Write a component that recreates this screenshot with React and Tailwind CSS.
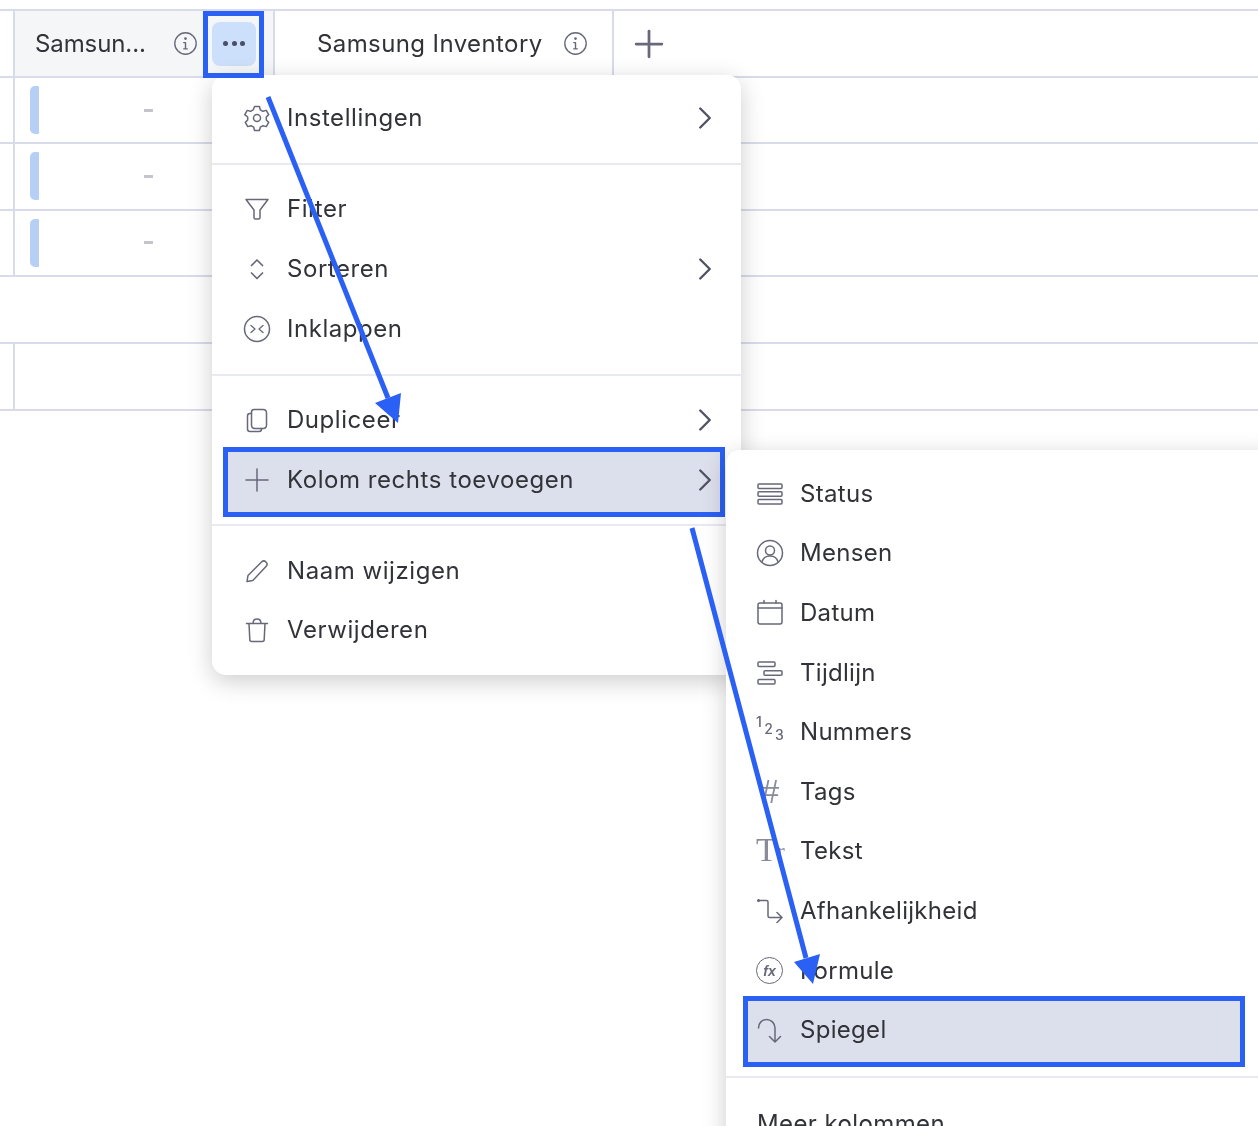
import { ChevronRight, Plus } from 'lucide-react';

const Ico = ({ children, size = 28 }) => (
  <svg width={size} height={size} viewBox="0 0 28 28" fill="none" stroke="#676879" strokeWidth="1.5" strokeLinecap="round" strokeLinejoin="round" className="relative shrink-0">
    {children}
  </svg>
);

const InfoIcon = () => (
  <Ico size={25}>
    <circle cx="14" cy="14" r="12" />
    <path d="M14 13v7M12 13h2M12 20h4" strokeWidth="1.6" />
    <circle cx="14" cy="8.500" r="0.800" fill="#676879" />
  </Ico>
);

const icons = {
  gear: (
    <Ico>
      <path d="M11.600 2.500h4.800l.9 3.300 2.700 1.500 3.300-.9 2.400 4.200-2.400 2.400v3l2.400 2.400-2.400 4.200-3.300-.9-2.700 1.500-.9 3.300h-4.800l-.9-3.300-2.700-1.500-3.300.9-2.400-4.200 2.400-2.400v-3L1.800 10.600l2.400-4.200 3.300.9 2.700-1.500z" />
      <circle cx="14" cy="14" r="3.500" />
    </Ico>
  ),
  filter: <Ico><path d="M3 4.500h22L17 15v7.500c0 1-.5 1.500-1.500 1.500h-3c-1 0-1.500-.5-1.500-1.500V15z" /></Ico>,
  sort: <Ico><path d="M8.500 10.500l5.500-5.500 5.500 5.500M8.500 18l5.500 5.500 5.500-5.500" strokeWidth="1.700" /></Ico>,
  collapse: (
    <Ico>
      <circle cx="14" cy="14" r="12.500" />
      <path d="M8 10.500l4 3.500-4 3.500M20 10.500l-4 3.500 4 3.500" strokeWidth="1.300" />
    </Ico>
  ),
  copy: (
    <Ico>
      <path d="M11 3.500h9c2 0 3.500 1.500 3.500 3.500v12c0 2-1.500 3.500-3.500 3.500h-8c-2 0-3.500-1.500-3.500-3.500V6c0-1.500 1-2.500 2.500-2.500z" />
      <path d="M8.500 7.500H7C5.500 7.500 4.500 8.500 4.500 10v13c0 1.500 1 2.500 2.500 2.500h9c1.500 0 2.500-1 2.500-2.500v-.5" />
    </Ico>
  ),
  plus: <Ico><path d="M14 3v22M3 14h22" /></Ico>,
  pencil: <Ico><path d="M4 24.500l1-6L18.500 5c1.500-1.500 3-1.500 4.500 0s1.500 3 0 4.500L9.800 23.500z" /></Ico>,
  trash: (
    <Ico>
      <path d="M3.500 7.500h21M10 7.500c0-3 1-4.500 4-4.500s4 1.500 4 4.500M6 7.500l.8 16c0 1.500 1 2 2 2h10.400c1 0 2-.5 2-2l.8-16" />
    </Ico>
  ),
  status: (
    <Ico>
      <rect x="2" y="4" width="24" height="4.500" rx="1" />
      <rect x="2" y="11.800" width="24" height="4.500" rx="1" />
      <rect x="2" y="19.500" width="24" height="4.500" rx="1" />
    </Ico>
  ),
  people: (
    <Ico>
      <circle cx="14" cy="14" r="12.500" />
      <circle cx="14" cy="11.500" r="4.500" />
      <path d="M6 23c1-4 4-6 8-6s7 2 8 6" />
    </Ico>
  ),
  date: (
    <Ico>
      <rect x="2" y="4" width="24" height="21" rx="2" />
      <path d="M2 9h24M8 1.500V4M20 1.500V4" />
    </Ico>
  ),
  timeline: (
    <Ico>
      <rect x="2" y="3" width="17" height="4.500" rx="1" />
      <rect x="8" y="11.800" width="18" height="4.500" rx="1" />
      <rect x="2" y="20.500" width="17" height="4.500" rx="1" />
    </Ico>
  ),
  numbers: (
    <span className="flex h-7 w-7 items-start text-[14px] leading-none font-medium text-[#676879]">
      <span className="mt-[-3px]">1</span>
      <span className="mt-[4px] ml-[2px]">2</span>
      <span className="mt-[10px] ml-[2px]">3</span>
    </span>
  ),
  tags: <span className="flex h-7 w-7 items-center justify-center font-['Liberation_Sans',sans-serif] text-[33px] leading-none font-light text-[#8a8b99]">#</span>,
  text: (
    <span className="flex h-7 w-[32px] items-end font-['Liberation_Serif',serif] leading-none tracking-normal text-[#8a8b99]">
      <span className="text-[34px] leading-[30px]">T</span>
      <span className="text-[24px] leading-[27px]">r</span>
    </span>
  ),
  dependency: (
    <Ico>
      <path d="M2.500 3.500h8c1 0 1.500.5 1.500 1.500v14c0 1 .5 1.500 1.500 1.500h12M21 15.500l5 5-5 5" />
      <circle cx="2.500" cy="3.500" r="0.800" fill="#676879" />
    </Ico>
  ),
  formula: (
    <span className="flex h-[27px] w-[27px] items-center justify-center rounded-full border-[1.5px] border-[#676879] font-['Liberation_Sans',sans-serif] text-[14px] leading-none font-bold tracking-normal text-[#676879] italic">
      fx
    </span>
  ),
  mirror: (
    <Ico>
      <path d="M2.500 12C2.500 7 6 3.500 10.500 3.500S19 7 19 12v14M13.500 20.500L19 26l5.500-5.500" />
    </Ico>
  ),
};

const MainRow = ({ icon, label, chevron, active }) => (
  <div className="relative mx-[14px] flex h-[59.670px] items-center pr-[3px] pl-[17px] tracking-[0.55px]">
    {active && <div className="absolute -top-[3px] -right-[-2px] -bottom-[7px] -left-[3px] border-[5px] border-[#2b60f5] bg-[#dcdfec]" />}
    <span className="relative flex w-[44px] shrink-0">{icons[icon]}</span>
    <span className="relative flex-1">{label}</span>
    {chevron && <ChevronRight size={38} strokeWidth={1.500} className="relative text-[#4f5165]" />}
  </div>
);

const SubRow = ({ icon, label, active }) => (
  <div className="relative mx-[20px] flex h-[59.600px] items-center pl-[10px] tracking-[0.3px]">
    {active && <div className="absolute -top-[4px] -right-[3px] -bottom-[7px] -left-[3px] border-[5px] border-[#2b60f5] bg-[#dcdfec]" />}
    <span className="relative flex w-[44px] shrink-0">{icons[icon]}</span>
    <span className="relative">{label}</span>
  </div>
);

const Divider = () => <div className="h-[2px] bg-[#e9e9f2]" />;

const subItems = [
  ['status', 'Status'],
  ['people', 'Mensen'],
  ['date', 'Datum'],
  ['timeline', 'Tijdlijn'],
  ['numbers', 'Nummers'],
  ['tags', 'Tags'],
  ['text', 'Tekst'],
  ['dependency', 'Afhankelijkheid'],
  ['formula', 'Formule'],
];

const DataRow = () => (
  <div className="flex h-[66.330px] border-b-2 border-[#d8dbea]">
    <div className="w-[15px] border-r-2 border-[#d8dbea]" />
    <div className="flex items-center pl-[15px]">
      <div className="h-[48px] w-[9px] rounded-l-[5px] rounded-r-[1px] bg-[#b5cff5]" />
      <span className="ml-[105px] h-[3px] w-[9px] bg-[#c4c4cb]" />
    </div>
  </div>
);

export default function App() {
  return (
    <div className="relative h-[1126px] w-[1258px] overflow-hidden bg-white font-['Inter',sans-serif] text-[24px] tracking-[0.4px] text-[#323338] blur-[0.5px]">
      {/* table */}
      <div className="pt-[9px]">
        <div className="flex h-[69px] border-y-2 border-[#d8dbea]">
          <div className="w-[15px] border-r-2 border-[#d8dbea]" />
          <div className="flex w-[260px] items-center border-r-2 border-[#d8dbea] bg-[#f5f6f8] pl-[20px]">
            <span className="w-[138px] tracking-[-0.1px]">Samsun...</span>
            <InfoIcon />
            <div className="ml-[14px] flex h-[44px] w-[44px] items-center justify-center gap-[3.500px] rounded-[8px] bg-[#cce0fb]">
              <span className="h-[5px] w-[5px] rounded-full bg-[#4a4e69]" />
              <span className="h-[5px] w-[5px] rounded-full bg-[#4a4e69]" />
              <span className="h-[5px] w-[5px] rounded-full bg-[#4a4e69]" />
            </div>
          </div>
          <div className="flex w-[339px] items-center border-r-2 border-[#d8dbea] pl-[42px]">
            <span className="w-[246px]">Samsung Inventory</span>
            <InfoIcon />
          </div>
          <div className="flex items-center pl-[13px]">
            <Plus size={44} strokeWidth={1.500} className="text-[#676879]" />
          </div>
        </div>
        <DataRow />
        <DataRow />
        <DataRow />
        <div className="h-[67px] border-b-2 border-[#d8dbea]" />
        <div className="flex h-[67px] border-b-2 border-[#d8dbea]">
          <div className="w-[15px] border-r-2 border-[#d8dbea]" />
        </div>
      </div>

      {/* column menu */}
      <div className="absolute top-[75px] left-[212px] w-[529px] rounded-[14px] bg-white pt-[13px] pb-[15px] shadow-[0_6px_24px_rgba(0,0,0,0.2)]">
        <MainRow icon="gear" label="Instellingen" chevron />
        <div className="mt-[15px] mb-[15px]"><Divider /></div>
        <MainRow icon="filter" label="Filter" />
        <MainRow icon="sort" label="Sorteren" chevron />
        <MainRow icon="collapse" label="Inklappen" />
        <div className="mt-[15px] mb-[15px]"><Divider /></div>
        <MainRow icon="copy" label="Dupliceer" chevron />
        <MainRow icon="plus" label="Kolom rechts toevoegen" chevron active />
        <div className="mt-[14px] mb-[15px]"><Divider /></div>
        <MainRow icon="pencil" label="Naam wijzigen" />
        <MainRow icon="trash" label="Verwijderen" />
      </div>

      {/* add column submenu */}
      <div className="absolute top-[450px] left-[726px] h-[720px] w-[560px] rounded-[14px] bg-white pt-[14px] shadow-[0_6px_24px_rgba(0,0,0,0.2)]">
        {subItems.map(([icon, label]) => (
          <SubRow key={label} icon={icon} label={label} />
        ))}
        <div className="w-[536px]">
          <SubRow icon="mirror" label="Spiegel" active />
        </div>
        <div className="mt-[16px]"><Divider /></div>
        <div className="mt-[28px] pl-[31px]">Meer kolommen</div>
      </div>

      {/* selected menu button */}
      <div className="absolute top-[11px] left-[203px] h-[67px] w-[61px] border-[5px] border-[#2b60f5]" />

      {/* arrows */}
      <svg className="absolute inset-0" width="1258" height="1126" fill="#2b60f5" stroke="none">
        <path d="M268 97L388 398" stroke="#2b60f5" strokeWidth="5" />
        <path d="M375 403L401 393L398 423Z" />
        <path d="M692 528L806 958" stroke="#2b60f5" strokeWidth="5" />
        <path d="M794 962L820 954L813 984Z" />
      </svg>
    </div>
  );
}
